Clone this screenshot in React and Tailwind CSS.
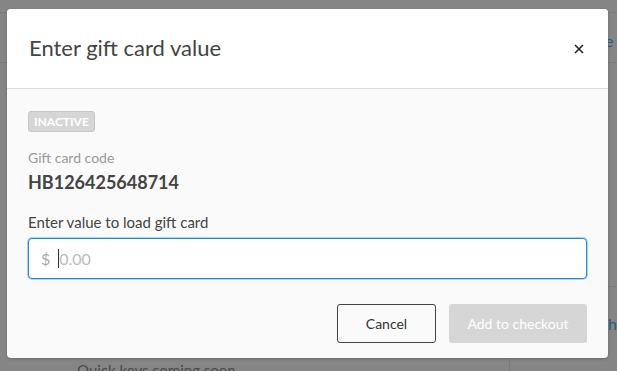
import React from "react";

export default function App() {
  return (
    <div className="relative w-[617px] h-[371px] overflow-hidden bg-[#858585] font-['Lato','Open_Sans',sans-serif] text-[#444]">
      {/* page behind the overlay */}
      <div className="h-[13px] border-b border-[#7a7a7a]"></div>
      <div className="flex h-[50px] border-b border-[#7a7a7a]">
        <div className="w-[605px]"></div>
        <div className="flex-1 pt-[16px] text-[16px] text-[#1f5d8e] whitespace-nowrap overflow-hidden">e n</div>
      </div>
      <div className="flex h-[308px]">
        <div className="w-[511px] flex flex-col justify-end pl-[77px]">
          <div className="translate-y-[10px] text-[15px] text-[#4a4a4a]">Quick keys coming soon</div>
        </div>
        <div className="flex-1 border-l border-[#7a7a7a] flex flex-col">
          <div className="h-[223px]"></div>
          <div className="border-t border-[#7a7a7a] pl-[92px] pt-[25px] text-[16px] text-[#1f5d8e] overflow-hidden whitespace-nowrap">th</div>
        </div>
      </div>

      {/* dialog */}
      <div className="absolute left-[7px] top-[9px] w-[601px] h-[349px] rounded-[4px] overflow-hidden bg-[#fafafa] shadow-[0_1px_3px_rgba(0,0,0,0.2)]">
        <div className="h-[80px] bg-white border-b border-[#dcdcdc] flex items-center justify-between pl-[22px] pr-[24px]">
          <h2 className="text-[22px] text-[#444] leading-none pb-[1px]">Enter gift card value</h2>
          <svg width="10" height="10" viewBox="0 0 10 10" className="mt-[1px]">
            <path d="M1 1L9 9M9 1L1 9" stroke="#222" strokeWidth="1.6" />
          </svg>
        </div>
        <div className="px-[21px] pt-[22px]">
          <div className="flex w-fit items-center h-[21px] px-[5px] rounded-[3px] bg-[#d6d6d6] border border-[#c6c6c6] text-[12px] leading-none font-bold text-white">
            INACTIVE
          </div>
          <div className="mt-[17px] text-[14px] leading-[17px] text-[#999]">Gift card code</div>
          <div className="mt-[5px] text-[18px] leading-[22px] font-bold text-[#444]">HB126425648714</div>
          <div className="mt-[20px] text-[15px] leading-[18px] text-[#444]">Enter value to load gift card</div>
          <div className="mt-[7px] h-[41px] flex items-center rounded-[4px] bg-white border border-[#1b8be4] shadow-[0_0_0_1px_rgba(27,139,228,0.35)] px-[12px] text-[16px]">
            <span className="text-[#aaa]">$</span>
            <span className="ml-[8px] w-[1px] h-[19px] bg-[#333]"></span>
            <span className="text-[#bbb]">0.00</span>
          </div>
          <div className="mt-[25px] flex justify-end gap-[13px]">
            <button className="w-[99px] h-[39px] rounded-[3px] border border-[#444] bg-transparent text-[14px] text-[#333]">
              Cancel
            </button>
            <button className="w-[138px] h-[39px] rounded-[3px] bg-[#d6d6d6] text-[14px] text-white">
              Add to checkout
            </button>
          </div>
        </div>
      </div>
    </div>
  );
}
